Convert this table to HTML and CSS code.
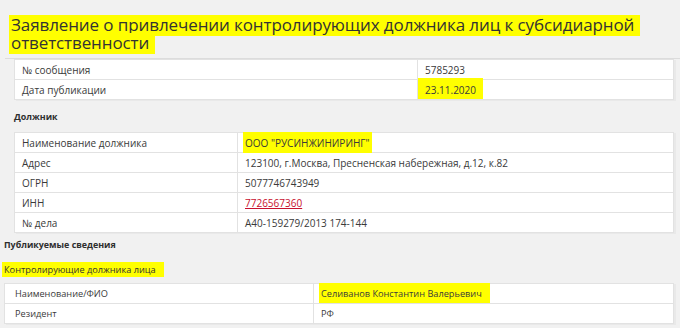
FILE: index.html
```html
<!DOCTYPE html>
<html lang="ru">
<head>
<meta charset="utf-8">
<link rel="stylesheet" href="styles.css">
</head>
<body>
<div class="page">
  <header class="head">
    <h1 class="title"><span class="mark">Заявление о привлечении контролирующих должника лиц к субсидиарной ответственности</span></h1>
  </header>

  <table class="tbl t1">
    <tr><td class="k">№ сообщения</td><td>5785293</td></tr>
    <tr><td class="k">Дата публикации</td><td><span class="mark date">23.11.2020</span></td></tr>
  </table>

  <h2 class="sec sec-debtor">Должник</h2>

  <table class="tbl t2">
    <tr><td class="k">Наименование должника</td><td><span class="mark org">ООО "РУСИНЖИНИРИНГ"</span></td></tr>
    <tr><td class="k">Адрес</td><td>123100, г.Москва, Пресненская набережная, д.12, к.82</td></tr>
    <tr><td class="k">ОГРН</td><td>5077746743949</td></tr>
    <tr><td class="k">ИНН</td><td><a class="link" href="#">7726567360</a></td></tr>
    <tr><td class="k">№ дела</td><td>А40-159279/2013 174-144</td></tr>
  </table>

  <h2 class="sec sec-pub">Публикуемые сведения</h2>
  <div class="sub"><span class="mark subm">Контролирующие должника лица</span></div>

  <table class="tbl t3">
    <tr><td class="k">Наименование/ФИО</td><td><span class="mark fio">Селиванов Константин Валерьевич</span></td></tr>
    <tr><td class="k">Резидент</td><td>РФ</td></tr>
  </table>
</div>
</body>
</html>
```

FILE: styles.css
```css
html, body {
  margin: 0;
  padding: 0;
  background: #f1f1f1;
}
body {
  font-family: "Open Sans", "Noto Sans", sans-serif;
  font-size: 10px;
  line-height: 14px;
  color: #3a3a3a;
}
.page {
  width: 680px;
  height: 328px;
  overflow: hidden;
}
.head {
  margin-left: 5px;
  height: 59px;
  border-bottom: 1px solid #dcdcdc;
  box-sizing: border-box;
  padding: 16px 0 0 6px;
}
.title {
  margin: 0;
  max-width: 660px;
  font-family: "Open Sans", sans-serif;
  font-weight: normal;
  font-size: 17px;
  line-height: 18px;
  letter-spacing: -0.1px;
  color: #333;
}
.mark {
  background: #ffff00;
  box-decoration-break: clone;
  -webkit-box-decoration-break: clone;
}
.title .mark {
  background: linear-gradient(transparent 4px, #ffff00 4px);
  padding: 2px 6px 0 2px;
  margin-left: -2px;
}
.tbl {
  border-collapse: collapse;
  background: #fff;
  table-layout: fixed;
  box-shadow: 2px 1px 0 #e9e9e9;
}
.tbl td {
  border: 1px solid #e2e2e2;
  height: 20px;
  padding: 0 0 0 7px;
  box-sizing: border-box;
  vertical-align: middle;
  white-space: nowrap;
}
.t1 {
  margin: 0 0 0 14px;
  width: 660px;
}
.t1 .k { width: 403px; }
.t2 {
  margin: 0 0 0 14px;
  width: 660px;
}
.t2 .k { width: 223px; }
.t3 {
  margin: 0 0 0 4px;
  width: 670px;
  font-size: 9.2px;
}
.t3 .k { width: 309px; padding-left: 10px; }
.sec {
  margin: 0;
  font-size: 8.9px;
  line-height: 14px;
  font-weight: bold;
  color: #2e2e2e;
}
.sec-debtor {
  padding: 10px 0 0 14px;
  height: 32px;
  box-sizing: border-box;
}
.sec-pub {
  padding: 5px 0 0 4px;
  height: 24px;
  box-sizing: border-box;
}
.sub {
  padding: 6px 0 0 4px;
  height: 26px;
  box-sizing: border-box;
  color: #333;
  font-size: 9.2px;
}
.subm { padding: 1px 8px 1px 2px; margin-left: -2px; }
.date { padding: 5px 7px 2px 0; margin-left: -7px; padding-left: 7px; }
.org { padding: 4px 2px 3px 2px; margin-left: -2px; }
.fio { padding: 4px 8px 3px 2px; margin-left: -2px; }
.link {
  color: #c8102e;
  text-decoration: underline;
}
```
